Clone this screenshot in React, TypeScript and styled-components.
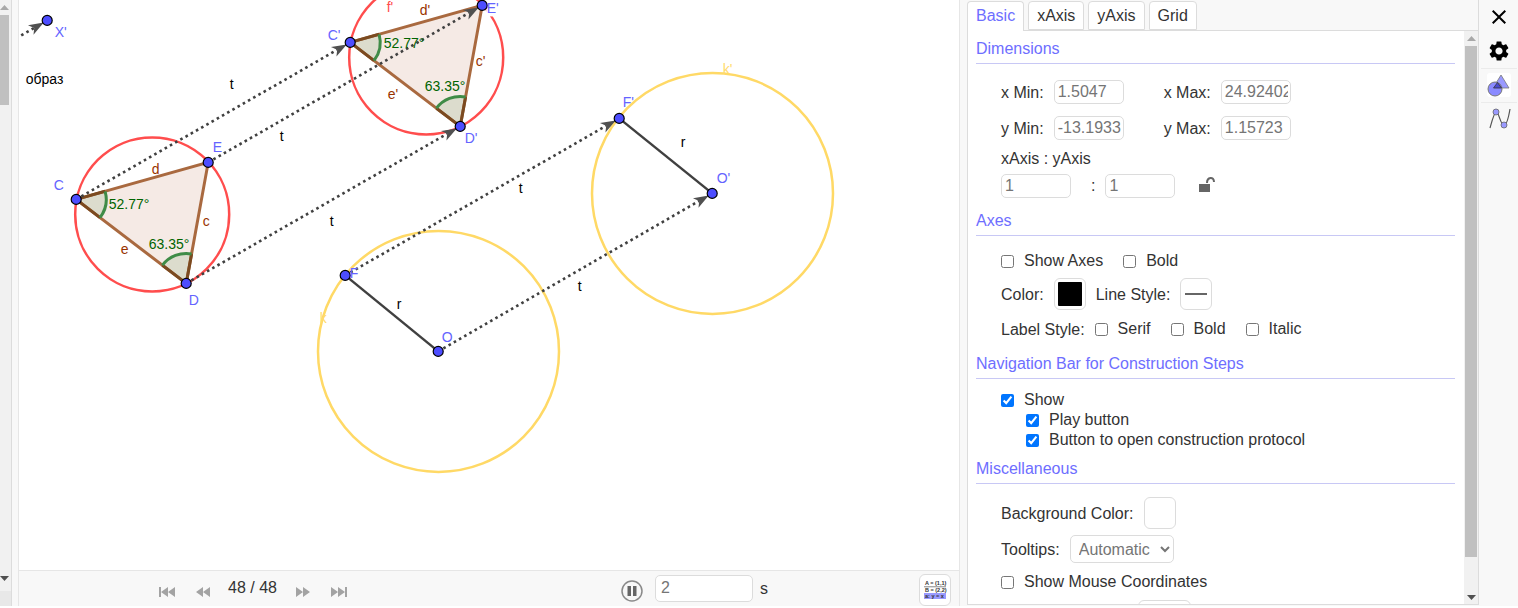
import React from "react";
import styled, { createGlobalStyle } from "styled-components";
import { MdClose, MdSettings } from "react-icons/md";

const Global = createGlobalStyle`
  html, body { margin: 0; padding: 0; background: #fff; }
  body { font-family: "Liberation Sans", Arial, sans-serif; font-size: 16px; color: #333; }
  * { box-sizing: border-box; }
`;

const App_ = styled.div`
  display: flex;
  width: 1518px;
  height: 606px;
  overflow: hidden;
  background: #f8f8f8;
`;

const LeftGutter = styled.div`
  width: 19px;
  flex: none;
  display: flex;
  border-right: 1px solid #e6e6e6;
`;

const Track = styled.div<{ $w: number; $pad: number }>`
  width: ${(p) => p.$w}px;
  flex: none;
  display: flex;
  flex-direction: column;
  background: #f1f1f1;
  padding: 0 ${(p) => p.$pad}px;
`;

const LeftTrack = styled(Track)`
  padding: 0 2px 0 0;
  border-right: 1px solid #dcdcdc;
`;

const ArrowBox = styled.div<{ $h: number; $end?: boolean }>`
  height: ${(p) => p.$h}px;
  flex: none;
  display: flex;
  justify-content: center;
  align-items: ${(p) => (p.$end ? "flex-start" : "center")};
`;

const Thumb = styled.div<{ $h: number }>`
  height: ${(p) => p.$h}px;
  flex: none;
  background: #c0c0c0;
`;

const TrackFill = styled.div`
  flex: 1;
`;

const TrackEnd = styled.div`
  height: 15px;
  flex: none;
  margin: 0 -2px 0 0;
  background: #e8e8e8;
`;

const Main = styled.div`
  width: 941px;
  flex: none;
  display: flex;
  flex-direction: column;
  border-right: 1px solid #e6e6e6;
`;

const Canvas = styled.svg`
  display: block;
  width: 940px;
  height: 570px;
  flex: none;
  background: #fff;
  font-family: "Liberation Sans", Arial, sans-serif;
  font-size: 14px;
`;

const NavBar = styled.div`
  height: 36px;
  flex: none;
  display: flex;
  align-items: center;
  padding: 0 8px 0 139px;
  border-top: 1px solid #e6e6e6;
  background: #f8f8f8;
`;

const NavIcon = styled.svg<{ $ml?: number }>`
  width: 18px;
  height: 12px;
  flex: none;
  margin: 7px 0 0 ${(p) => p.$ml ?? 0}px;
`;

const StepLabel = styled.span`
  width: 50px;
  margin: 0 16px 2px;
  flex: none;
  white-space: nowrap;
`;

const PauseIcon = styled.svg`
  width: 22px;
  height: 22px;
  flex: none;
  margin: 5px 0 0 273px;
`;

const SpeedInput = styled.input`
  width: 98px;
  height: 27px;
  margin-left: 12px;
  flex: none;
  padding: 0 5px 1px;
  border: 1px solid #dcdcdc;
  border-radius: 5px;
  background: #fff;
  color: #757575;
  font: 16px "Liberation Sans", Arial, sans-serif;
`;

const Unit = styled.span`
  margin-left: 7px;
`;

const TableButton = styled.div`
  width: 32px;
  height: 32px;
  margin-left: auto;
  margin-top: 2px;
  flex: none;
  display: flex;
  align-items: center;
  justify-content: center;
  border: 1px solid #dcdcdc;
  border-radius: 6px;
  background: #fff;
`;

const TableSvg = styled.svg`
  width: 24px;
  height: 20px;
  font-family: "Liberation Sans", Arial, sans-serif;
  font-size: 5.5px;
  font-weight: bold;
`;

const Splitter = styled.div`
  width: 7px;
  flex: none;
`;

const Panel = styled.div`
  width: 512px;
  height: 605px;
  flex: none;
  display: flex;
  flex-direction: column;
  border-right: 1px solid #dcdcdc;
  border-bottom: 1px solid #dcdcdc;
`;

const Tabs = styled.div`
  height: 31px;
  flex: none;
  display: flex;
  gap: 4px;
  padding-top: 1px;
  border-bottom: 1px solid #dcdcdc;
`;

const Tab = styled.div<{ $active?: boolean }>`
  height: ${(p) => (p.$active ? 30 : 29)}px;
  padding: 0 8px;
  line-height: 27px;
  background: #fff;
  border: 1px solid #dcdcdc;
  border-bottom: ${(p) => (p.$active ? "0" : "1px solid #dcdcdc")};
  border-radius: 4px 4px 0 0;
  color: ${(p) => (p.$active ? "#6e6eff" : "#333")};
  position: relative;
`;

const Content = styled.div`
  flex: 1;
  min-height: 0;
  display: flex;
  border-left: 1px solid #dcdcdc;
  background: #fff;
`;

const Body = styled.div`
  flex: 1;
  min-width: 0;
  overflow: hidden;
  padding: 2px 9px 0 8px;
`;

const Heading = styled.div<{ $mt?: number }>`
  height: 31px;
  margin-top: ${(p) => p.$mt ?? 0}px;
  line-height: 32px;
  color: #6e6eff;
  border-bottom: 1px solid #c8c8f5;
`;

const Row = styled.div<{ $h: number; $mt: number; $indent?: number }>`
  height: ${(p) => p.$h}px;
  margin-top: ${(p) => p.$mt}px;
  margin-left: ${(p) => 25 + (p.$indent ?? 0)}px;
  display: flex;
  align-items: center;
  white-space: nowrap;
`;

const FieldLabel = styled.span<{ $ml?: number }>`
  margin-left: ${(p) => p.$ml ?? 0}px;
  margin-right: 10px;
  padding-top: 2px;
`;

const Field = styled.input`
  width: 70px;
  height: 24px;
  flex: none;
  padding: 0 2px 0 3px;
  border: 1px solid #dcdcdc;
  border-radius: 5px;
  background: #fff;
  color: #757575;
  font: 16px "Liberation Sans", Arial, sans-serif;
`;

const Colon = styled.span`
  margin: 0 10px 0 20px;
`;

const LockIcon = styled.svg`
  width: 16px;
  height: 16px;
  margin: 0 0 4px 24px;
  flex: none;
`;

const Check = styled.input.attrs({ type: "checkbox" })<{ $ml?: number }>`
  width: 13px;
  height: 13px;
  margin: 0 10px 0 ${(p) => p.$ml ?? 0}px;
  flex: none;
`;

const Swatch = styled.div`
  width: 32px;
  height: 32px;
  flex: none;
  margin-right: 10px;
  display: flex;
  align-items: center;
  justify-content: center;
  border: 1px solid #dcdcdc;
  border-radius: 6px;
  background: #fff;
`;

const ColorChip = styled.div`
  width: 24px;
  height: 24px;
  border-radius: 1px;
  background: #000;
`;

const LineChip = styled.div`
  width: 22px;
  height: 2px;
  background: #666;
`;

const Select = styled.select`
  width: 104px;
  height: 28px;
  padding: 0 0 0 4px;
  border: 1px solid #dcdcdc;
  border-radius: 5px;
  background: #fff;
  color: #757575;
  font: 16px "Liberation Sans", Arial, sans-serif;
`;

const PartialInput = styled.div`
  width: 53px;
  height: 32px;
  flex: none;
  border: 1px solid #dcdcdc;
  border-radius: 6px;
  margin-left: 137px;
  background: #fff;
`;

const ToolBar = styled.div`
  flex: 1;
  display: flex;
  flex-direction: column;
  align-items: center;
  padding-top: 5px;
`;

const ToolDivider = styled.div`
  width: 36px;
  height: 1px;
  flex: none;
  margin: 5px 0 4px;
  background: #ebebeb;
`;

const ToolButton = styled.div`
  width: 24px;
  height: 24px;
  flex: none;
  border-radius: 3px;
  background: #fff;
  display: flex;
`;

const IconSlot = styled.div`
  height: 24px;
  margin-bottom: 10px;
  display: flex;
  color: #000;
`;

const GearSlot = styled(IconSlot)`
  margin-bottom: 0;
`;

const UpArrow = () => (
  <svg width="9" height="5" viewBox="0 0 9 5"><path d="M0 5 L4.5 0 L9 5Z" fill="#a8a8a8" /></svg>
);
const DownArrow = () => (
  <svg width="9" height="5" viewBox="0 0 9 5"><path d="M0 0 L4.5 5 L9 0Z" fill="#505050" /></svg>
);

type P = [number, number];
const C: P = [76, 199], E: P = [208, 162], D: P = [186, 283];
const shift: P = [274, -157];
const mv = (p: P): P => [p[0] + shift[0], p[1] + shift[1]];

const Vector = ({ a, b }: { a: P; b: P }) => {
  const dx = b[0] - a[0], dy = b[1] - a[1];
  const l = Math.hypot(dx, dy);
  const ux = dx / l, uy = dy / l;
  const tip: P = [b[0] - ux * 4, b[1] - uy * 4];
  const back: P = [tip[0] - ux * 15, tip[1] - uy * 15];
  const notch: P = [tip[0] - ux * 11, tip[1] - uy * 11];
  const nx = -uy * 5.5, ny = ux * 5.5;
  return (
    <g>
      <line x1={a[0]} y1={a[1]} x2={notch[0]} y2={notch[1]} stroke="#404040" strokeWidth="2.6" strokeDasharray="2.6 3.4" />
      <path d={`M${tip} L${back[0] + nx} ${back[1] + ny} L${notch} L${back[0] - nx} ${back[1] - ny}Z`} fill="#505050" />
    </g>
  );
};

const Triangle = ({ dx, dy }: { dx: number; dy: number }) => (
  <g transform={`translate(${dx} ${dy})`}>
    <path d="M76 199 L208 162 L186 283Z" fill="#993300" fillOpacity="0.1" />
    <path d="M76 199 L104.9 190.9 A30 30 0 0 1 99.8 217.2Z" fill="#006400" fillOpacity="0.1" />
    <path d="M186 283 L162.2 264.8 A30 30 0 0 1 191.4 253.5Z" fill="#006400" fillOpacity="0.1" />
    <path d="M76 199 L208 162 L186 283Z" fill="none" stroke="#a9693f" strokeWidth="3" />
    <path d="M76 199 L104.9 190.9 M76 199 L99.8 217.2 M186 283 L162.2 264.8 M186 283 L191.4 253.5" stroke="#7b4a20" strokeWidth="3" />
    <path d="M104.9 190.9 A30 30 0 0 1 99.8 217.2 M162.2 264.8 A30 30 0 0 1 191.4 253.5" fill="none" stroke="#3f8c47" strokeWidth="3" />
  </g>
);

const points: P[] = [[47, 20], C, E, D, mv(C), mv(E), mv(D), [345, 275], [438, 351], [619, 118], [712, 193]];

const labels: { t: string; x: number; y: number; c: string }[] = [
  { t: "X'", x: 54.5, y: 37, c: "#6464ff" },
  { t: "C", x: 53.5, y: 190, c: "#6464ff" },
  { t: "E", x: 212.5, y: 152, c: "#6464ff" },
  { t: "D", x: 188.5, y: 305, c: "#6464ff" },
  { t: "C'", x: 327.5, y: 40, c: "#6464ff" },
  { t: "E'", x: 486.5, y: 13, c: "#6464ff" },
  { t: "D'", x: 464.5, y: 143, c: "#6464ff" },
  { t: "F", x: 349.5, y: 278, c: "#6464ff" },
  { t: "O", x: 441.5, y: 342, c: "#6464ff" },
  { t: "F'", x: 622.5, y: 107, c: "#6464ff" },
  { t: "O'", x: 716.5, y: 183, c: "#6464ff" },
  { t: "d", x: 151.5, y: 174, c: "#993300" },
  { t: "c", x: 202.5, y: 226, c: "#993300" },
  { t: "e", x: 120.5, y: 254, c: "#993300" },
  { t: "d'", x: 419.5, y: 15, c: "#993300" },
  { t: "c'", x: 475.5, y: 66, c: "#993300" },
  { t: "e'", x: 387.5, y: 99, c: "#993300" },
  { t: "f'", x: 386.5, y: 12, c: "#ff4d4d" },
  { t: "52.77°", x: 108.5, y: 209, c: "#006400" },
  { t: "63.35°", x: 148.5, y: 249, c: "#006400" },
  { t: "52.77°", x: 383.5, y: 48, c: "#006400" },
  { t: "63.35°", x: 424.5, y: 91, c: "#006400" },
  { t: "t", x: 229.5, y: 89, c: "#000" },
  { t: "t", x: 279.5, y: 141, c: "#000" },
  { t: "t", x: 329.5, y: 226, c: "#000" },
  { t: "t", x: 518.5, y: 193, c: "#000" },
  { t: "t", x: 577.5, y: 291, c: "#000" },
  { t: "r", x: 396.5, y: 309, c: "#000" },
  { t: "r", x: 680.5, y: 147, c: "#000" },
  { t: "k", x: 319.5, y: 323, c: "#ffdb6e" },
  { t: "k'", x: 722.5, y: 74, c: "#ffdb6e" },
  { t: "образ", x: 25.5, y: 84, c: "#000" },
];

const Drawing = () => (
  <Canvas viewBox="18.8 -0.4 940 570">
    <circle cx="152" cy="214" r="77" fill="none" stroke="#ff4d4d" strokeWidth="2.5" />
    <circle cx="426" cy="57" r="77" fill="none" stroke="#ff4d4d" strokeWidth="2.5" />
    <rect x="486" y="2" width="14" height="14" fill="#fff" />
    <circle cx="438.3" cy="351" r="120.5" fill="none" stroke="#ffd966" strokeWidth="2.5" />
    <circle cx="712.3" cy="193" r="120.5" fill="none" stroke="#ffd966" strokeWidth="2.5" />
    <Triangle dx={0} dy={0} />
    <Triangle dx={shift[0]} dy={shift[1]} />
    <line x1="345" y1="275" x2="438" y2="351" stroke="#404040" strokeWidth="2.5" />
    <line x1="619" y1="118" x2="712" y2="193" stroke="#404040" strokeWidth="2.5" />
    <Vector a={[21, 35]} b={[47, 20]} />
    <Vector a={C} b={mv(C)} />
    <Vector a={E} b={mv(E)} />
    <Vector a={D} b={mv(D)} />
    <Vector a={[345, 275]} b={[619, 118]} />
    <Vector a={[438, 351]} b={[712, 193]} />
    {points.map((p, i) => (
      <circle key={i} cx={p[0]} cy={p[1]} r="5" fill="#4d4dff" stroke="#000" strokeWidth="1.2" />
    ))}
    {labels.map((l, i) => (
      <text key={i} x={l.x} y={l.y} fill={l.c}>{l.t}</text>
    ))}
  </Canvas>
);

const Nav = ({ kind, ml }: { kind: "first" | "prev" | "next" | "last"; ml?: number }) => {
  const d = {
    first: "M1 1H3V11H1Z M10 1V11L3 6Z M17 1V11L10 6Z",
    prev: "M9 1V11L2 6Z M16 1V11L9 6Z",
    next: "M2 1V11L9 6Z M9 1V11L16 6Z",
    last: "M1 1V11L8 6Z M8 1V11L15 6Z M15 1H17V11H15Z",
  }[kind];
  return (
    <NavIcon $ml={ml} viewBox="0 0 18 12"><path d={d} fill="#a3a3a3" /></NavIcon>
  );
};

export default function App() {
  return (
    <App_>
      <Global />
      <LeftGutter>
        <LeftTrack $w={12} $pad={0}>
          <ArrowBox $h={15}><UpArrow /></ArrowBox>
          <Thumb $h={90} />
          <TrackFill />
          <ArrowBox $h={15} $end><DownArrow /></ArrowBox>
          <TrackEnd />
        </LeftTrack>
      </LeftGutter>
      <Main>
        <Drawing />
        <NavBar>
          <Nav kind="first" />
          <Nav kind="prev" ml={18} />
          <StepLabel>48 / 48</StepLabel>
          <Nav kind="next" />
          <Nav kind="last" ml={18} />
          <PauseIcon viewBox="0 0 22 22">
            <circle cx="11" cy="11" r="10" fill="#f8f8f8" stroke="#8a8a8a" strokeWidth="1.5" />
            <rect x="6.5" y="6" width="3.5" height="10" fill="#666" />
            <rect x="12" y="6" width="3.5" height="10" fill="#666" />
          </PauseIcon>
          <SpeedInput defaultValue="2" />
          <Unit>s</Unit>
          <TableButton>
            <TableSvg viewBox="0 0 24 20">
              <text x="2" y="5" fill="#333">A = (1,1)</text>
              <rect x="1" y="6.5" width="22" height="0.7" fill="#555" />
              <text x="2" y="12" fill="#333">B = (2,2)</text>
              <rect x="1" y="13" width="22" height="6" fill="#9a9aff" />
              <text x="2" y="18" fill="#333">a: y = x</text>
            </TableSvg>
          </TableButton>
        </NavBar>
      </Main>
      <Splitter />
      <Panel>
        <Tabs>
          <Tab $active>Basic</Tab>
          <Tab>xAxis</Tab>
          <Tab>yAxis</Tab>
          <Tab>Grid</Tab>
        </Tabs>
        <Content>
          <Body>
            <Heading>Dimensions</Heading>
            <Row $h={24} $mt={16}>
              <FieldLabel>x Min:</FieldLabel>
              <Field defaultValue="1.5047" />
              <FieldLabel $ml={40}>x Max:</FieldLabel>
              <Field defaultValue="24.92402" />
            </Row>
            <Row $h={24} $mt={12}>
              <FieldLabel>y Min:</FieldLabel>
              <Field defaultValue="-13.1933" />
              <FieldLabel $ml={40}>y Max:</FieldLabel>
              <Field defaultValue="1.15723" />
            </Row>
            <Row $h={20} $mt={9}>xAxis : yAxis</Row>
            <Row $h={24} $mt={5}>
              <Field defaultValue="1" />
              <Colon>:</Colon>
              <Field defaultValue="1" />
              <LockIcon viewBox="0 0 16 16">
                <path d="M0 8H11V16H0Z" fill="#666" />
                <path d="M8 7C8 1 15 0 15 6" fill="none" stroke="#666" strokeWidth="2" />
              </LockIcon>
            </Row>
            <Heading $mt={7}>Axes</Heading>
            <Row $h={20} $mt={15}>
              <Check />Show Axes<Check $ml={20} />Bold
            </Row>
            <Row $h={32} $mt={7}>
              <FieldLabel>Color:</FieldLabel>
              <Swatch><ColorChip /></Swatch>
              <FieldLabel>Line Style:</FieldLabel>
              <Swatch><LineChip /></Swatch>
            </Row>
            <Row $h={20} $mt={9}>
              <FieldLabel>Label Style:</FieldLabel>
              <Check />Serif<Check $ml={20} />Bold<Check $ml={20} />Italic
            </Row>
            <Heading $mt={9}>Navigation Bar for Construction Steps</Heading>
            <Row $h={20} $mt={11}>
              <Check defaultChecked />Show
            </Row>
            <Row $h={20} $mt={0} $indent={25}>
              <Check defaultChecked />Play button
            </Row>
            <Row $h={20} $mt={0} $indent={25}>
              <Check defaultChecked />Button to open construction protocol
            </Row>
            <Heading $mt={3}>Miscellaneous</Heading>
            <Row $h={32} $mt={13}>
              <FieldLabel>Background Color:</FieldLabel>
              <Swatch />
            </Row>
            <Row $h={28} $mt={6}>
              <FieldLabel>Tooltips:</FieldLabel>
              <Select defaultValue="Automatic"><option>Automatic</option></Select>
            </Row>
            <Row $h={20} $mt={9}>
              <Check />Show Mouse Coordinates
            </Row>
            <Row $h={32} $mt={8}>
              <PartialInput />
            </Row>
          </Body>
          <Track $w={14} $pad={1}>
            <ArrowBox $h={15}><UpArrow /></ArrowBox>
            <Thumb $h={511} />
            <TrackFill />
            <ArrowBox $h={13}><DownArrow /></ArrowBox>
          </Track>
        </Content>
      </Panel>
      <ToolBar>
        <IconSlot><MdClose size={24} /></IconSlot>
        <GearSlot><MdSettings size={24} /></GearSlot>
        <ToolDivider />
        <ToolButton>
          <svg width="24" height="24" viewBox="0 0 24 24">
            <path d="M14 2 L22 15 H6Z" fill="#9a9aff" stroke="#777" strokeWidth="0.8" />
            <circle cx="8" cy="16" r="7" fill="#8a8aff" stroke="#777" strokeWidth="1" />
            <path d="M10.5 9.5 L6.5 15 H14.5Z" fill="#4a4ad0" stroke="#333" strokeWidth="0.8" />
          </svg>
        </ToolButton>
        <ToolDivider />
        <svg width="24" height="24" viewBox="0 0 24 24">
          <path d="M3 21 C5 14 7 6 9 5 C12 4 13 18 17 18 C20 18 22 8 23 2" fill="none" stroke="#555" strokeWidth="1.2" />
          <circle cx="9" cy="5" r="3" fill="#9a9aff" stroke="#666" strokeWidth="0.8" />
          <circle cx="17" cy="18" r="3" fill="#9a9aff" stroke="#666" strokeWidth="0.8" />
        </svg>
      </ToolBar>
    </App_>
  );
}
